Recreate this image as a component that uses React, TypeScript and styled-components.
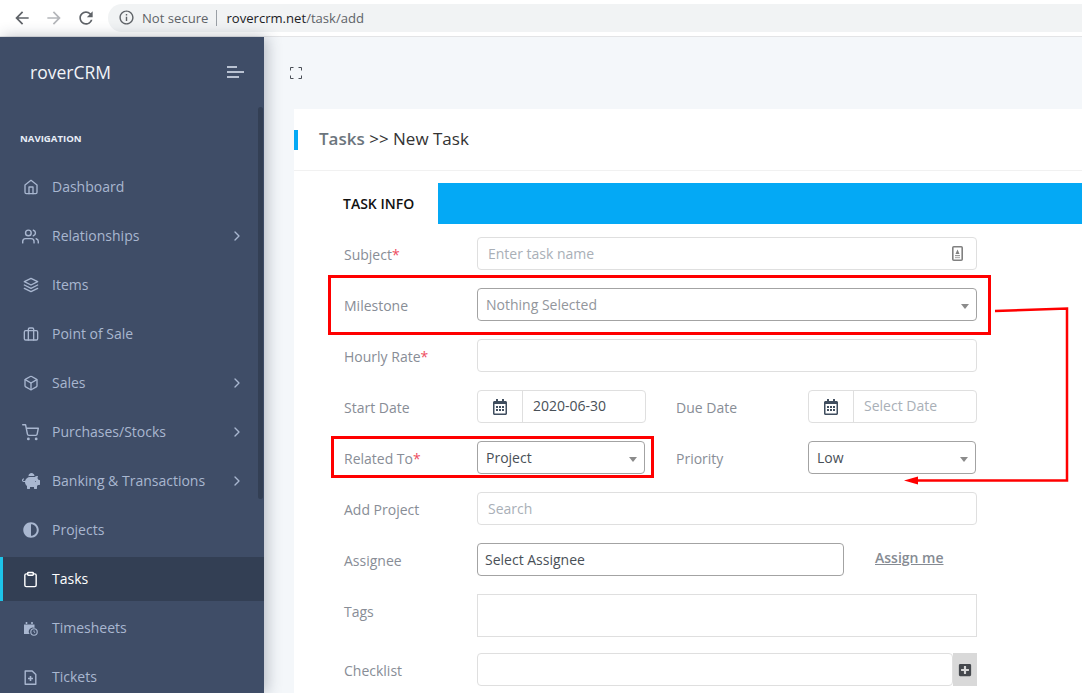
import React from 'react';
import styled, { createGlobalStyle } from 'styled-components';
import {
  FiBox,
  FiBriefcase,
  FiChevronRight,
  FiClipboard,
  FiHome,
  FiLayers,
  FiShoppingCart,
  FiUsers,
} from 'react-icons/fi';
import { FaAdjust, FaPiggyBank, FaPlusSquare, FaRegCalendarAlt } from 'react-icons/fa';
import { MdArrowBack, MdArrowForward, MdInfoOutline, MdRefresh } from 'react-icons/md';

const GlobalStyle = createGlobalStyle`
  html, body {
    margin: 0;
    padding: 0;
    height: 100%;
    overflow: hidden;
    font-family: "Open Sans", "Liberation Sans", sans-serif;
  }
  * {
    box-sizing: border-box;
  }
`;

const Page = styled.div`
  position: relative;
  width: 1082px;
  height: 693px;
  overflow: hidden;
  display: flex;
  flex-direction: column;
  background: #f4f7fa;
`;

const BrowserBar = styled.div`
  flex: 0 0 37px;
  display: flex;
  align-items: center;
  background: #fff;
  border-bottom: 1px solid #e3e4e6;
  padding: 0 0 1px 12px;
`;

const NavButton = styled.span<{ $muted?: boolean }>`
  display: flex;
  width: 20px;
  height: 20px;
  margin-right: 12px;
  font-size: 20px;
  color: ${(p) => (p.$muted ? '#b4b6ba' : '#5f6368')};
`;

const UrlPill = styled.div`
  flex: 1;
  height: 28px;
  margin: 0 -20px 0 0;
  display: flex;
  align-items: center;
  padding-left: 10px;
  border-radius: 14px;
  background: #f1f3f4;
  font-size: 13.1px;
  color: #5f6368;
  svg {
    font-size: 17px;
    margin-right: 7px;
  }
`;

const UrlDivider = styled.span`
  width: 1px;
  height: 16px;
  margin: 0 9px 0 8px;
  background: #9aa0a6;
`;

const UrlHost = styled.span`
  color: #202124;
`;

const Body = styled.div`
  flex: 1;
  display: flex;
  min-height: 0;
`;

const Sidebar = styled.aside`
  position: relative;
  z-index: 2;
  flex: 0 0 264px;
  background: #3f4d67;
  box-shadow: 3px 0 14px rgba(40, 50, 70, 0.3);
`;

const Brand = styled.div`
  height: 72px;
  padding: 0 20px 2px 30px;
  display: flex;
  align-items: center;
  justify-content: space-between;
  color: #f2f4f8;
  font-size: 17.5px;
`;

const Burger = styled.span`
  display: flex;
  flex-direction: column;
  gap: 3px;
  width: 17px;
  i {
    display: block;
    height: 2px;
    background: #b9c2d2;
  }
  i:nth-child(1) {
    width: 10px;
  }
  i:nth-child(3) {
    width: 12px;
  }
`;

const NavCaption = styled.div`
  height: 56px;
  padding: 24px 0 0 20px;
  font-size: 9.6px;
  line-height: 12px;
  font-weight: 700;
  color: #e8edf7;
`;

const MenuList = styled.nav`
  display: flex;
  flex-direction: column;
  gap: 5px;
`;

const MenuItem = styled.div<{ $active?: boolean }>`
  height: 44px;
  padding-bottom: 2px;
  display: flex;
  align-items: center;
  padding-left: ${(p) => (p.$active ? '20px' : '23px')};
  font-size: 14px;
  color: ${(p) => (p.$active ? '#fff' : '#a9b7d0')};
  background: ${(p) => (p.$active ? '#333f54' : 'transparent')};
  border-left: ${(p) => (p.$active ? '3px solid #1dc4e9' : 'none')};
`;

const MenuIcon = styled.span<{ $size: number; $shift: number }>`
  flex: 0 0 29px;
  display: flex;
  margin-top: 2px;
  margin-left: ${(p) => p.$shift}px;
  margin-right: ${(p) => -p.$shift}px;
  font-size: ${(p) => p.$size}px;
`;

const MenuLabel = styled.span`
  flex: 1;
`;

const MenuArrow = styled.span`
  display: flex;
  margin-top: 2px;
  margin-right: 19px;
  font-size: 16px;
`;

const ScrollThumb = styled.div`
  position: absolute;
  top: 70px;
  right: 1px;
  width: 5px;
  height: 392px;
  border-radius: 3px;
  background: #333f54;
`;

const Main = styled.main`
  flex: 1;
  min-width: 0;
  padding-left: 30px;
`;

const TopStrip = styled.div`
  height: 72px;
  display: flex;
  align-items: center;
  margin-left: -4px;
  color: #4a4f57;
`;

const FullscreenWrap = styled.span`
  display: flex;
`;

const Card = styled.section`
  background: #fff;
  height: 600px;
`;

const CardHeader = styled.header`
  height: 62px;
  position: relative;
  display: flex;
  align-items: center;
  padding: 0 0 2px 25px;
  border-bottom: 1px solid #f1f1f1;
  font-size: 17px;
  color: #333;
  &::before {
    content: '';
    position: absolute;
    left: 0;
    top: 21px;
    width: 4px;
    height: 20px;
    background: #04a9f5;
  }
`;

const Crumb = styled.span`
  font-weight: 600;
  color: #6c757d;
`;

const TabBar = styled.div`
  margin: 12px 0 13px 25px;
  height: 41px;
  background: #04a9f5;
  display: flex;
`;

const Tab = styled.div`
  width: 119px;
  background: #fff;
  display: flex;
  align-items: center;
  padding-left: 24px;
  font-size: 14px;
  font-weight: 600;
  color: #111;
`;

const Form = styled.div`
  padding-left: 50px;
  width: 683px;
`;

const Row = styled.div<{ $gap?: number }>`
  display: flex;
  align-items: flex-start;
  margin-bottom: ${(p) => p.$gap ?? 18}px;
`;

const Label = styled.label`
  flex: 0 0 133px;
  height: 33px;
  line-height: 35px;
  font-size: 14px;
  color: #888d96;
  em {
    font-style: normal;
    color: #ee4d5f;
  }
`;

const SideLabel = styled(Label)<{ $afterSelect?: boolean }>`
  padding-left: ${(p) => (p.$afterSelect ? 31 : 30)}px;
  flex: 0 0 ${(p) => (p.$afterSelect ? 163 : 162)}px;
`;

const Field = styled.div<{ $width?: number; $height?: number; $square?: boolean }>`
  position: relative;
  flex: ${(p) => (p.$width ? `0 0 ${p.$width}px` : '1')};
  height: ${(p) => p.$height ?? 33}px;
  display: flex;
  align-items: center;
  padding: 0 10px;
  border: 1px solid #dfdfdf;
  border-radius: ${(p) => (p.$square ? '0' : '4px')};
  font-size: 14px;
  color: #495057;
  background: #fff;
`;

const DateField = styled(Field)`
  padding-bottom: 2px;
`;

const Placeholder = styled.span`
  color: #a9afb7;
`;

const SelectBox = styled(Field)<{ $tight?: boolean }>`
  border-color: #a3a3a3;
  padding: 0 ${(p) => (p.$tight ? 7 : 8)}px;
`;

const MutedValue = styled.span`
  color: #92969c;
`;

const Caret = styled.span`
  position: absolute;
  right: 7px;
  top: 15px;
  width: 0;
  height: 0;
  border-left: 4px solid transparent;
  border-right: 4px solid transparent;
  border-top: 5px solid #8b8b8b;
`;

const TrailingIcon = styled.span`
  position: absolute;
  right: 13px;
  top: 8px;
  display: flex;
`;

const DateAddon = styled.span`
  flex: 0 0 45px;
  height: calc(100% + 2px);
  display: flex;
  align-items: center;
  justify-content: center;
  margin: 0 10px -2px -10px;
  border-right: 1px solid #dfdfdf;
  color: #3f4d5e;
  font-size: 16px;
`;

const AssignLink = styled.a`
  margin-left: 31px;
  font-size: 14px;
  line-height: 30px;
  font-weight: 600;
  color: #868b93;
  text-decoration: underline;
`;

const AddAddon = styled.span`
  flex: 0 0 24px;
  height: 33px;
  display: flex;
  align-items: center;
  justify-content: center;
  background: #d9d9d9;
  color: #45484d;
  font-size: 14px;
`;

const Annotations = styled.svg`
  position: absolute;
  left: 0;
  top: 0;
  z-index: 5;
  pointer-events: none;
`;

const TimesheetIcon = () => (
  <svg width="15" height="15" viewBox="0 0 15 15" fill="none">
    <path d="M1 3.5h10.5V7A4 4 0 0 0 6.6 13H1z" fill="currentColor" />
    <path d="M3.5 1v2M9 1v2" stroke="currentColor" strokeWidth="1.6" />
    <circle cx="11" cy="11" r="3.2" stroke="currentColor" strokeWidth="1.1" />
    <path d="M11 9.4V11l1.2.7" stroke="currentColor" strokeWidth="0.9" />
  </svg>
);

const TicketIcon = () => (
  <svg width="15" height="15" viewBox="0 0 15 15" fill="none" stroke="currentColor" strokeWidth="1.4">
    <path d="M2.2 1h7l3.6 3.6v9.7H2.2z" strokeLinejoin="round" />
    <path d="M7.5 6v5M5 8.5h5" strokeWidth="1.6" />
  </svg>
);

const FullscreenIcon = () => (
  <svg width="12" height="12" viewBox="0 0 12 12" fill="none" stroke="currentColor" strokeWidth="1">
    <path d="M.5 3.5V.5h3M8.5.5h3v3M11.5 8.500v3h-3M3.500 11.500h-3v-3" />
  </svg>
);

const ContactIcon = () => (
  <svg width="11" height="15" viewBox="0 0 11 15" fill="none">
    <rect x="0.8" y="0.8" width="9.4" height="13.4" rx="1" stroke="#808080" strokeWidth="1.6" />
    <rect x="3" y="9" width="5" height="1.2" fill="#9a9a9a" />
    <rect x="3" y="11" width="5" height="1.2" fill="#b5b5b5" />
    <path d="M5.500 3.500 7.500 8h-4z" fill="#808080" />
  </svg>
);

const menu = [
  { label: 'Dashboard', icon: <FiHome />, size: 16, shift: 0 },
  { label: 'Relationships', icon: <FiUsers />, size: 17, shift: -1, more: true },
  { label: 'Items', icon: <FiLayers />, size: 16, shift: 0 },
  { label: 'Point of Sale', icon: <FiBriefcase />, size: 16, shift: 0 },
  { label: 'Sales', icon: <FiBox />, size: 16, shift: 0, more: true },
  { label: 'Purchases/Stocks', icon: <FiShoppingCart />, size: 17, shift: -1, more: true },
  { label: 'Banking & Transactions', icon: <FaPiggyBank />, size: 18, shift: -1, more: true },
  { label: 'Projects', icon: <FaAdjust />, size: 16, shift: 0 },
  { label: 'Tasks', icon: <FiClipboard />, size: 17, shift: -1, active: true },
  { label: 'Timesheets', icon: <TimesheetIcon />, size: 15, shift: 0 },
  { label: 'Tickets', icon: <TicketIcon />, size: 15, shift: 0 },
];

const App: React.FC = () => (
  <Page>
    <GlobalStyle />
    <BrowserBar>
      <NavButton>
        <MdArrowBack />
      </NavButton>
      <NavButton $muted>
        <MdArrowForward />
      </NavButton>
      <NavButton>
        <MdRefresh />
      </NavButton>
      <UrlPill>
        <MdInfoOutline />
        Not secure
        <UrlDivider />
        <span>
          <UrlHost>rovercrm.net</UrlHost>/task/add
        </span>
      </UrlPill>
    </BrowserBar>
    <Body>
      <Sidebar>
        <Brand>
          roverCRM
          <Burger>
            <i />
            <i />
            <i />
          </Burger>
        </Brand>
        <NavCaption>NAVIGATION</NavCaption>
        <MenuList>
          {menu.map((item) => (
            <MenuItem key={item.label} $active={item.active}>
              <MenuIcon $size={item.size} $shift={item.shift}>
                {item.icon}
              </MenuIcon>
              <MenuLabel>{item.label}</MenuLabel>
              {item.more ? (
                <MenuArrow>
                  <FiChevronRight />
                </MenuArrow>
              ) : null}
            </MenuItem>
          ))}
        </MenuList>
        <ScrollThumb />
      </Sidebar>
      <Main>
        <TopStrip>
          <FullscreenWrap>
            <FullscreenIcon />
          </FullscreenWrap>
        </TopStrip>
        <Card>
          <CardHeader>
            <span>
              <Crumb>Tasks</Crumb> &gt;&gt; New Task
            </span>
          </CardHeader>
          <TabBar>
            <Tab>TASK INFO</Tab>
          </TabBar>
          <Form>
            <Row>
              <Label>
                Subject<em>*</em>
              </Label>
              <Field>
                <Placeholder>Enter task name</Placeholder>
                <TrailingIcon>
                  <ContactIcon />
                </TrailingIcon>
              </Field>
            </Row>
            <Row>
              <Label>Milestone</Label>
              <SelectBox>
                <MutedValue>Nothing Selected</MutedValue>
                <Caret />
              </SelectBox>
            </Row>
            <Row>
              <Label>
                Hourly Rate<em>*</em>
              </Label>
              <Field />
            </Row>
            <Row>
              <Label>Start Date</Label>
              <DateField $width={169}>
                <DateAddon>
                  <FaRegCalendarAlt />
                </DateAddon>
                2020-06-30
              </DateField>
              <SideLabel>Due Date</SideLabel>
              <DateField $width={169}>
                <DateAddon>
                  <FaRegCalendarAlt />
                </DateAddon>
                <Placeholder>Select Date</Placeholder>
              </DateField>
            </Row>
            <Row>
              <Label>
                Related To<em>*</em>
              </Label>
              <SelectBox $width={168}>
                Project
                <Caret />
              </SelectBox>
              <SideLabel $afterSelect>Priority</SideLabel>
              <SelectBox $width={168}>
                Low
                <Caret />
              </SelectBox>
            </Row>
            <Row>
              <Label>Add Project</Label>
              <Field>
                <Placeholder>Search</Placeholder>
              </Field>
            </Row>
            <Row>
              <Label>Assignee</Label>
              <SelectBox $width={367} $tight>
                Select Assignee
              </SelectBox>
              <AssignLink>Assign me</AssignLink>
            </Row>
            <Row $gap={16}>
              <Label>Tags</Label>
              <Field $height={43} $square />
            </Row>
            <Row>
              <Label>Checklist</Label>
              <Field />
              <AddAddon>
                <FaPlusSquare />
              </AddAddon>
            </Row>
          </Form>
        </Card>
      </Main>
    </Body>
    <Annotations width="1082" height="693" viewBox="0 0 1082 693" fill="none">
      <rect x="329.5" y="276.5" width="660" height="57" stroke="#f00" strokeWidth="3" />
      <rect x="332.5" y="437.5" width="320" height="39" stroke="#f00" strokeWidth="3" />
      <path d="M995 311 1067 308.5V480.5L918 480.5" stroke="#f00" strokeWidth="2.5" />
      <path d="M904 480.5 918 476.5V484.5z" fill="#f00" />
    </Annotations>
  </Page>
);

export default App;
